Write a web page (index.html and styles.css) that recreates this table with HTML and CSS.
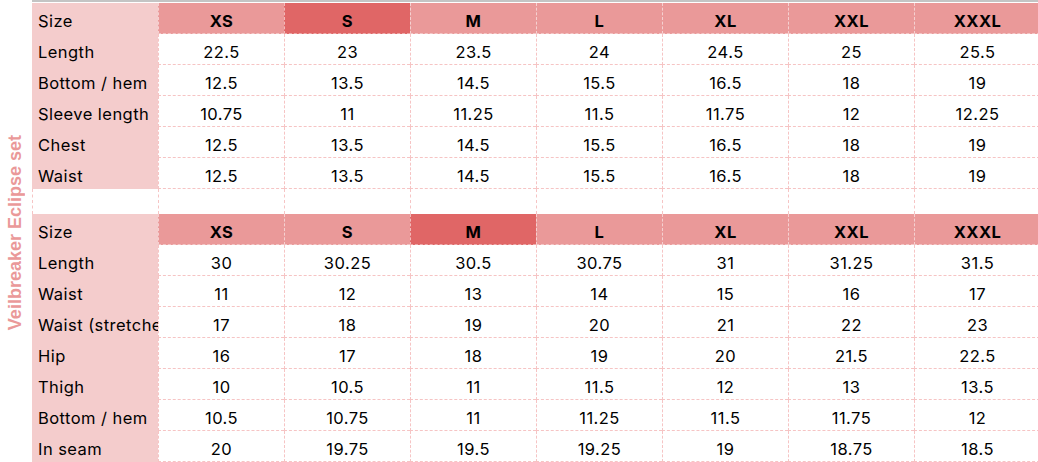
FILE: index.html
```html
<!DOCTYPE html>
<html>
<head>
<meta charset="utf-8">
<link rel="stylesheet" href="styles.css">
</head>
<body>
<div class="sheet">
  <div class="side"><span class="side-label">Veilbreaker Eclipse set</span></div>
  <div class="tables">
    <div class="grid">
      <div class="cell label">Size</div>
      <div class="cell head">XS</div>
      <div class="cell head hot">S</div>
      <div class="cell head">M</div>
      <div class="cell head">L</div>
      <div class="cell head">XL</div>
      <div class="cell head">XXL</div>
      <div class="cell head">XXXL</div>

      <div class="cell label">Length</div>
      <div class="cell">22.5</div><div class="cell">23</div><div class="cell">23.5</div><div class="cell">24</div><div class="cell">24.5</div><div class="cell">25</div><div class="cell">25.5</div>

      <div class="cell label">Bottom / hem</div>
      <div class="cell">12.5</div><div class="cell">13.5</div><div class="cell">14.5</div><div class="cell">15.5</div><div class="cell">16.5</div><div class="cell">18</div><div class="cell">19</div>

      <div class="cell label">Sleeve length</div>
      <div class="cell">10.75</div><div class="cell">11</div><div class="cell">11.25</div><div class="cell">11.5</div><div class="cell">11.75</div><div class="cell">12</div><div class="cell">12.25</div>

      <div class="cell label">Chest</div>
      <div class="cell">12.5</div><div class="cell">13.5</div><div class="cell">14.5</div><div class="cell">15.5</div><div class="cell">16.5</div><div class="cell">18</div><div class="cell">19</div>

      <div class="cell label">Waist</div>
      <div class="cell">12.5</div><div class="cell">13.5</div><div class="cell">14.5</div><div class="cell">15.5</div><div class="cell">16.5</div><div class="cell">18</div><div class="cell">19</div>
    </div>

    <div class="grid">
      <div class="cell blank"></div><div class="cell blank"></div><div class="cell blank"></div><div class="cell blank"></div><div class="cell blank"></div><div class="cell blank"></div><div class="cell blank"></div><div class="cell blank"></div>
    </div>

    <div class="grid">
      <div class="cell label">Size</div>
      <div class="cell head">XS</div>
      <div class="cell head">S</div>
      <div class="cell head hot">M</div>
      <div class="cell head">L</div>
      <div class="cell head">XL</div>
      <div class="cell head">XXL</div>
      <div class="cell head">XXXL</div>

      <div class="cell label">Length</div>
      <div class="cell">30</div><div class="cell">30.25</div><div class="cell">30.5</div><div class="cell">30.75</div><div class="cell">31</div><div class="cell">31.25</div><div class="cell">31.5</div>

      <div class="cell label">Waist</div>
      <div class="cell">11</div><div class="cell">12</div><div class="cell">13</div><div class="cell">14</div><div class="cell">15</div><div class="cell">16</div><div class="cell">17</div>

      <div class="cell label">Waist (stretched)</div>
      <div class="cell">17</div><div class="cell">18</div><div class="cell">19</div><div class="cell">20</div><div class="cell">21</div><div class="cell">22</div><div class="cell">23</div>

      <div class="cell label">Hip</div>
      <div class="cell">16</div><div class="cell">17</div><div class="cell">18</div><div class="cell">19</div><div class="cell">20</div><div class="cell">21.5</div><div class="cell">22.5</div>

      <div class="cell label">Thigh</div>
      <div class="cell">10</div><div class="cell">10.5</div><div class="cell">11</div><div class="cell">11.5</div><div class="cell">12</div><div class="cell">13</div><div class="cell">13.5</div>

      <div class="cell label">Bottom / hem</div>
      <div class="cell">10.5</div><div class="cell">10.75</div><div class="cell">11</div><div class="cell">11.25</div><div class="cell">11.5</div><div class="cell">11.75</div><div class="cell">12</div>

      <div class="cell label">In seam</div>
      <div class="cell">20</div><div class="cell">19.75</div><div class="cell">19.5</div><div class="cell">19.25</div><div class="cell">19</div><div class="cell">18.75</div><div class="cell">18.5</div>
    </div>
  </div>
</div>
</body>
</html>
```

FILE: styles.css
```css
html, body {
  margin: 0;
  padding: 0;
  background: #ffffff;
  overflow: hidden;
}

body {
  width: 1038px;
  height: 462px;
  font-family: Inter, "Noto Sans", sans-serif;
  color: #000000;
}

.sheet {
  display: flex;
  width: 1038px;
  height: 462px;
  overflow: hidden;
}

.side {
  width: 32px;
  flex: none;
  display: flex;
  align-items: center;
  justify-content: center;
  padding-top: 3px;
  box-sizing: border-box;
}

.side-label {
  writing-mode: vertical-rl;
  transform: rotate(180deg);
  font-family: "Liberation Sans", Arial, sans-serif;
  font-weight: bold;
  font-size: 18px;
  color: #ea9999;
  white-space: nowrap;
  margin-left: -2px;
}

.tables {
  flex: none;
  width: 1008px;
  padding-top: 1px;
  border-top: 2px solid #c4c4c4;
}

.grid {
  display: grid;
  grid-template-columns: repeat(8, 126px);
}

.cell {
  box-sizing: border-box;
  height: 31px;
  padding-top: 6px;
  line-height: 24px;
  font-size: 16.5px;
  letter-spacing: 0.45px;
  text-align: center;
  white-space: nowrap;
  overflow: hidden;
  border-left: 1px dashed #f6c4c4;
  border-bottom: 1px dashed #f6c4c4;
}

.label {
  text-align: left;
  padding-left: 5px;
  background: #f4cccc;
  border-left: 1px solid #f4cccc;
  border-bottom: 1px solid #f4cccc;
}

.head {
  background: #ea9999;
  font-weight: 700;
  border-left: 1px dashed rgba(255, 255, 255, 0.55);
  border-bottom: 1px dashed rgba(255, 255, 255, 0.45);
}

.hot {
  background: #e06666;
}

.blank {
  height: 25px;
  border-bottom: none;
}
```
